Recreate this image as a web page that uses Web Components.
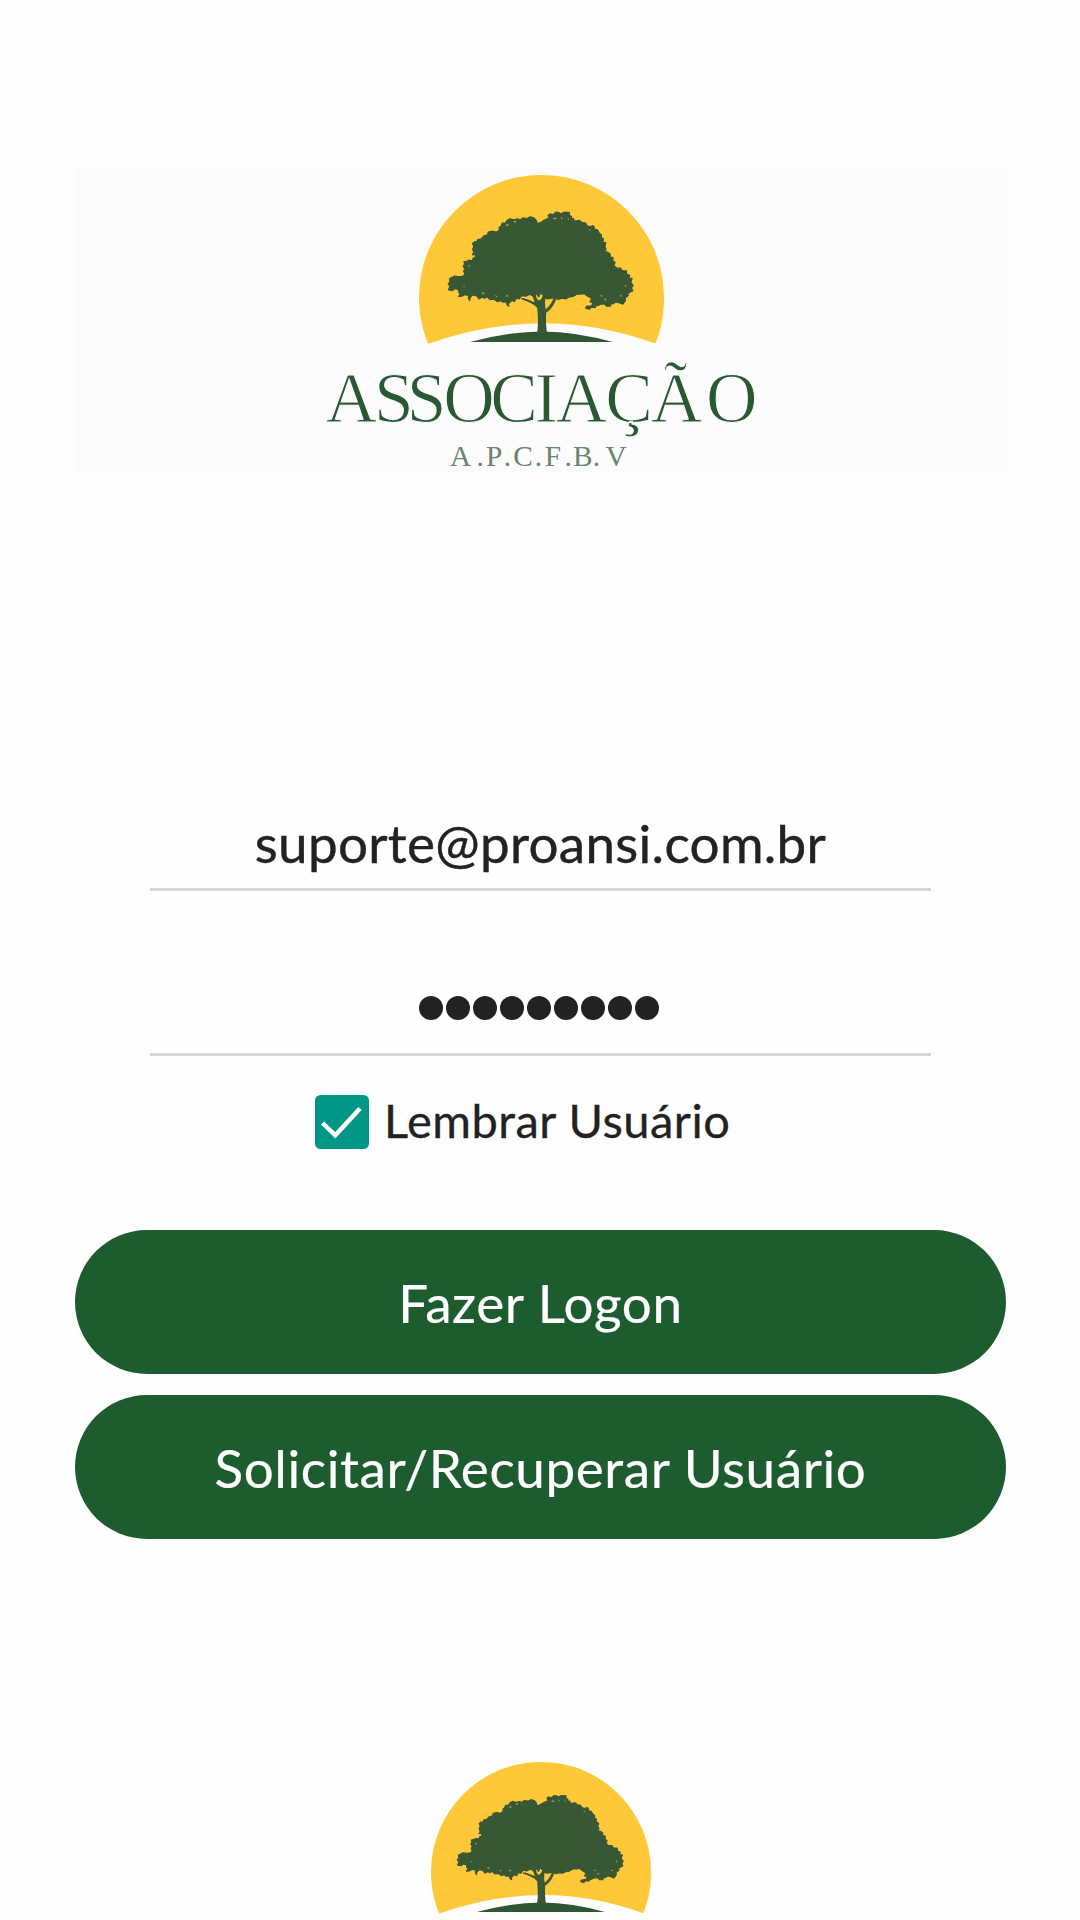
<!DOCTYPE html>
<html lang="pt-BR">
<head>
<meta charset="utf-8">
<title>Associação A.P.C.F.B.V</title>
<style>
  body {
    margin: 0;
    background: #fefefe;
    font-family: Lato, "Open Sans", sans-serif;
    color: #222222;
  }
</style>
</head>
<body>
<tela-login></tela-login>

<script>
// simbolo da associacao: sol, arvore e colina
class LogoArvore extends HTMLElement {
  connectedCallback() {
    const shadow = this.attachShadow({ mode: 'open' });
    shadow.innerHTML = `
    <style>
      :host { display: block; }
      svg { display: block; width: 100%; height: auto; }
    </style>
    <svg viewBox="55 43 736 510" aria-hidden="true">
      <path fill="#ffc838" d="M83 550C65 510 55 460 55 411A368 368 0 0 1 791 411C791 460 783 508 765 549Q600 489 432 488Q255 489 83 550Z"/>
      <path fill="#305535" d="M208 545Q320 514 425 513Q530 514 637 545Z"/>
      <g fill="#375735" transform="translate(-2 0)">
        <path stroke="#375735" stroke-width="4" stroke-linejoin="round" d="M146 388L150 377L145 370L150 364L149 354L158 350L164 347L178 349L189 347L195 342L191 331L196 326L190 318L194 310L192 304L202 302L207 299L216 301L220 293L228 290L225 281L218 283L222 274L218 266L222 258L218 249L223 244L232 243L233 237L244 235L251 227L263 223L265 215L278 212L288 215L298 209L298 200L303 197L307 188L317 187L322 179L330 175L342 178L353 175L361 178L369 172L382 174L391 169L402 172L409 179L411 188L421 187L431 180L442 175L449 172L445 165L450 160L461 162L468 155L477 156L483 160L493 155L509 156L508 163L515 168L514 175L522 174L521 180L532 181L538 179L547 186L558 188L560 194L570 199L580 195L584 201L582 206L593 208L598 217L605 223L604 231L611 235L609 244L618 247L615 258L619 266L614 273L624 275L632 281L630 289L640 291L639 301L646 306L642 315L651 323L663 323L667 331L680 331L680 340L690 345L687 353L697 354L693 366L700 375L695 382L699 391L690 395L682 402L686 405L676 412L677 420L669 431L657 426L648 424L640 430L634 428L632 437L620 437L616 431L604 430L592 436L585 432L587 441L575 440L568 446L558 443L560 438L576 436L580 426L571 424L576 414L564 407L554 399L543 401L529 401L519 408L507 406L499 415L486 413L475 417L467 412L456 413L443 415L435 410L437 399L429 403L421 397L417 409L408 398L401 407L389 401L379 407L365 405L358 415L348 413L344 423L336 420L325 430L327 437L321 433L321 425L309 425L303 420L292 423L283 416L270 417L262 408L255 413L246 410L237 415L232 407L219 403L211 410L209 420L205 411L208 405L196 402L186 407L176 408L181 400L176 394L177 387L164 384L158 390Z"/>
        <path d="M411 519Q417 493 412 442Q401 427 365 416L372 413Q397 421 405 426L395 400H408Q409 419 418 420Q428 415 430 399H440Q432 429 438 446Q453 435 462 412L471 410Q462 442 439 457Q437 493 442 519Z"/>
        <path fill="none" stroke="#375735" stroke-width="4" d="M262 410Q286 421 311 419M365 414Q387 419 402 430M468 412Q505 417 531 401"/>
      </g>
      <g fill="#a3933a">
        <path d="M314 194l8-5 4 5-7 3zM338 182l7-3 2 6-5 2zM456 174l9-4 5 5-9 2zM480 168l7 5-4 4zM500 170l7 5-3 3zM201 319l5-7 4 5zM671 377l5-5 4 6zM654 407l8-4 4 5zM596 407l9-5 2 6zM241 398l9-4 2 9zM312 407l12-5-2 7zM282 403l10 4-4 3zM613 412l6 6-7 4zM564 205l9 3-6 2zM185 377l7-3 1 4z"/>
      </g>
    </svg>`;
  }
}

class MarcaAssociacao extends HTMLElement {
  connectedCallback() {
    const shadow = this.attachShadow({ mode: 'open' });
    shadow.innerHTML = `
    <style>
      :host {
        display: flex;
        flex-direction: column;
        align-items: center;
        box-sizing: border-box;
        height: 306px;
        padding-top: 7px;
        background: #fcfcfc;
      }
      logo-arvore { width: 245px; margin-left: 1px; }
      .nome {
        display: block;
        width: 480px;
        height: 126px;
        margin-top: 6px;
        font-family: "Liberation Serif", serif;
        text-anchor: middle;
      }
      /* contorno na cor do fundo afina as letras */
      .titulo { stroke: #fcfcfc; stroke-width: 1px; }
    </style>
    <logo-arvore></logo-arvore>
    <svg class="nome" viewBox="300 350 480 126">
      <text class="titulo" y="422.5" font-size="73" fill="#2a5833" x="346 389.5 423 466.5 512.5 545.5 581.5 630 678.5 735">ASSOCIAÇÃO</text>
      <text y="467.5" font-size="30" fill="#69846d" x="457.7 477.7 492 505.7 521.7 537.3 552.3 567.7 582.7 596.7 616.8">A.P.C.F.B.V</text>
    </svg>`;
  }
}

class CampoLogin extends HTMLElement {
  connectedCallback() {
    const shadow = this.attachShadow({ mode: 'open' });
    shadow.innerHTML = `
    <style>
      :host {
        display: flex;
        justify-content: center;
        align-items: center;
        box-sizing: border-box;
        width: 781px;
        height: 93px;
        border-bottom: 3px solid #d6d6d6;
        font-size: 53px;
        line-height: 64px;
        letter-spacing: 0.3px;
        -webkit-text-stroke: 0.4px;
      }
    </style>
    <slot></slot>`;
  }
}

// bolinhas da senha
class SenhaOculta extends HTMLElement {
  connectedCallback() {
    const total = Number(this.getAttribute('tamanho'));
    const shadow = this.attachShadow({ mode: 'open' });
    shadow.innerHTML = `
    <style>
      :host { display: flex; gap: 3px; margin-right: 3px; }
      i { width: 24px; height: 24px; border-radius: 50%; background: #222222; }
    </style>
    ${'<i></i>'.repeat(total)}`;
  }
}

class CaixaLembrar extends HTMLElement {
  connectedCallback() {
    const shadow = this.attachShadow({ mode: 'open' });
    shadow.innerHTML = `
    <style>
      :host {
        display: flex;
        align-items: center;
        gap: 15px;
        height: 54px;
        font-size: 47px;
        line-height: 54px;
        letter-spacing: 0.5px;
        -webkit-text-stroke: 0.3px;
      }
      svg { display: block; width: 54px; height: 54px; }
      span { padding-bottom: 4px; white-space: nowrap; }
    </style>
    <svg viewBox="0 0 54 54">
      <rect width="54" height="54" rx="5.5" fill="#009688"/>
      <path d="M7.5 28L20.3 40.3L45 13.5" fill="none" stroke="#fff" stroke-width="4.5"/>
    </svg>
    <span><slot></slot></span>`;
  }
}

class BotaoVerde extends HTMLElement {
  connectedCallback() {
    const shadow = this.attachShadow({ mode: 'open' });
    shadow.innerHTML = `
    <style>
      :host { display: block; }
      button {
        display: block;
        width: 100%;
        height: 144px;
        padding: 0;
        border: none;
        border-radius: 72px;
        background: #1d5c2f;
        color: #ffffff;
        font: 53px Lato, "Open Sans", sans-serif;
        letter-spacing: 0.6px;
        -webkit-text-stroke: 0.2px;
        cursor: pointer;
      }
    </style>
    <button><slot></slot></button>`;
  }
}

class TelaLogin extends HTMLElement {
  connectedCallback() {
    const shadow = this.attachShadow({ mode: 'open' });
    shadow.innerHTML = `
    <style>
      :host {
        display: flex;
        flex-direction: column;
        box-sizing: border-box;
        width: 1080px;
        height: 1920px;
        padding: 168px 74px 0 75px;
        overflow: hidden;
      }
      form {
        display: flex;
        flex-direction: column;
        align-items: center;
        margin-top: 324px;
      }
      .senha { margin-top: 72px; }
      caixa-lembrar {
        align-self: flex-start;
        margin: 39px 0 81px 240px;
      }
      .botoes {
        display: flex;
        flex-direction: column;
        gap: 21px;
        align-self: stretch;
      }
      .rodape { width: 220px; margin: 223px auto 0; }
    </style>
    <marca-associacao></marca-associacao>
    <form onsubmit="return false">
      <campo-login>suporte@proansi.com.br</campo-login>
      <campo-login class="senha"><senha-oculta tamanho="9"></senha-oculta></campo-login>
      <caixa-lembrar>Lembrar Usuário</caixa-lembrar>
      <div class="botoes">
        <botao-verde>Fazer Logon</botao-verde>
        <botao-verde>Solicitar/Recuperar Usuário</botao-verde>
      </div>
    </form>
    <logo-arvore class="rodape"></logo-arvore>`;
  }
}

customElements.define('logo-arvore', LogoArvore);
customElements.define('marca-associacao', MarcaAssociacao);
customElements.define('campo-login', CampoLogin);
customElements.define('senha-oculta', SenhaOculta);
customElements.define('caixa-lembrar', CaixaLembrar);
customElements.define('botao-verde', BotaoVerde);
customElements.define('tela-login', TelaLogin);
</script>
</body>
</html>
